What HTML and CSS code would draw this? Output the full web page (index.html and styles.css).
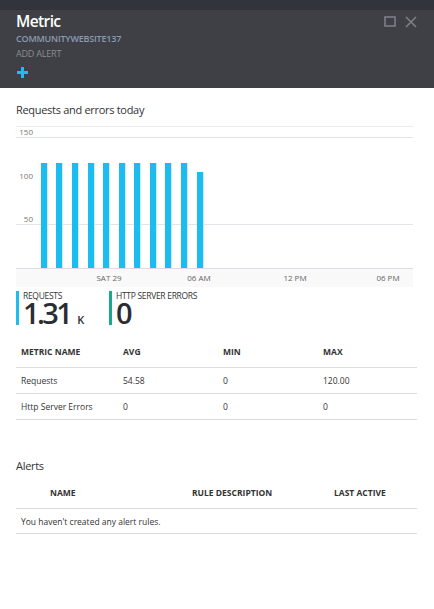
FILE: index.html
```html
<!DOCTYPE html>
<html>
<head>
<meta charset="utf-8">
<link rel="stylesheet" href="styles.css">
</head>
<body>
<div class="topstrip"></div>
<header class="blade-header">
  <div class="header-text">
    <div class="title">Metric</div>
    <div class="subtitle">COMMUNITYWEBSITE137</div>
    <div class="action-label">ADD ALERT</div>
    <svg class="plus" width="11" height="11" viewBox="0 0 11 11"><rect x="4" y="0" width="3" height="11" fill="#1ebcef"/><rect x="0" y="4" width="11" height="3" fill="#1ebcef"/></svg>
  </div>
  <div class="window-icons">
    <svg width="12" height="11" viewBox="0 0 12 11"><rect x="1" y="1" width="10" height="9" fill="none" stroke="#7c7f86" stroke-width="1.6"/></svg>
    <svg width="12" height="12" viewBox="0 0 12 12"><path d="M1 1 L11 11 M11 1 L1 11" stroke="#7c7f86" stroke-width="1.6"/></svg>
  </div>
</header>

<section class="chart-section">
  <div class="section-title">Requests and errors today</div>
  <svg class="chart" width="402" height="166" viewBox="0 0 402 166">
    <rect x="0" y="146" width="397" height="19" fill="#f9f9f9"/>
    <line x1="0" y1="4.5" x2="397" y2="4.5" stroke="#ececf0"/>
    <line x1="0" y1="15.5" x2="397" y2="15.5" stroke="#e3e3ea"/>
    <line x1="0" y1="102.5" x2="397" y2="102.5" stroke="#e3e3ea"/>
    <line x1="0" y1="146.5" x2="397" y2="146.5" stroke="#dcdce2"/>
    <g class="ylab">
      <text x="17" y="13" text-anchor="end">150</text>
      <text x="17" y="57" text-anchor="end">100</text>
      <text x="17" y="100" text-anchor="end">50</text>
    </g>
    <g fill="#1bbcef">
      <rect x="25" y="41" width="6" height="105"/>
      <rect x="40" y="41" width="6" height="105"/>
      <rect x="56" y="41" width="6" height="105"/>
      <rect x="72" y="41" width="6" height="105"/>
      <rect x="87" y="41" width="6" height="105"/>
      <rect x="103" y="41" width="6" height="105"/>
      <rect x="118" y="41" width="6" height="105"/>
      <rect x="134" y="41" width="6" height="105"/>
      <rect x="149" y="41" width="6" height="105"/>
      <rect x="165" y="41" width="6" height="105"/>
      <rect x="181" y="50" width="6" height="96"/>
    </g>
    <g fill="#c9eefb">
      <rect x="31" y="41" width="1" height="105"/>
      <rect x="46" y="41" width="1" height="105"/>
      <rect x="62" y="41" width="1" height="105"/>
      <rect x="78" y="41" width="1" height="105"/>
      <rect x="93" y="41" width="1" height="105"/>
      <rect x="109" y="41" width="1" height="105"/>
      <rect x="124" y="41" width="1" height="105"/>
      <rect x="140" y="41" width="1" height="105"/>
      <rect x="155" y="41" width="1" height="105"/>
      <rect x="171" y="41" width="1" height="105"/>
      <rect x="187" y="50" width="1" height="96"/>
    </g>
    <g class="xlab" text-anchor="middle">
      <text x="93" y="159">SAT 29</text>
      <text x="183" y="159">06 AM</text>
      <text x="279" y="159">12 PM</text>
      <text x="372" y="159">06 PM</text>
    </g>
  </svg>
</section>

<section class="stats">
  <div class="stat stat-blue">
    <div class="stat-label">REQUESTS</div>
    <div class="stat-value">1.31<span class="unit">K</span></div>
  </div>
  <div class="stat stat-green">
    <div class="stat-label">HTTP SERVER ERRORS</div>
    <div class="stat-value">0</div>
  </div>
</section>

<table class="metrics">
  <thead>
    <tr><th class="c1">METRIC NAME</th><th class="c2">AVG</th><th class="c3">MIN</th><th class="c4">MAX</th></tr>
  </thead>
  <tbody>
    <tr><td>Requests</td><td>54.58</td><td>0</td><td>120.00</td></tr>
    <tr><td>Http Server Errors</td><td>0</td><td>0</td><td>0</td></tr>
  </tbody>
</table>

<section class="alerts">
  <div class="section-title alerts-title">Alerts</div>
  <table class="alert-table">
    <thead>
      <tr><th class="a1">NAME</th><th class="a2">RULE DESCRIPTION</th><th class="a3">LAST ACTIVE</th></tr>
    </thead>
    <tbody>
      <tr><td colspan="3">You haven't created any alert rules.</td></tr>
    </tbody>
  </table>
</section>
</body>
</html>
```
FILE: styles.css
```css
* { box-sizing: border-box; }
body {
  margin: 0;
  background: #ffffff;
  font-family: "Open Sans", "Noto Sans", sans-serif;
  color: #333;
}
.topstrip { height: 10px; background: #31343a; }
.blade-header {
  height: 78px;
  background: #3e4046;
  display: flex;
  justify-content: space-between;
  padding: 0 17px 0 16px;
}
.header-text { display: flex; flex-direction: column; }
.title {
  color: #fff;
  font-size: 15.5px;
  font-weight: 600;
  line-height: 20px;
  margin-top: 1px;
  letter-spacing: -0.6px;
}
.subtitle {
  color: #8c9bb2;
  font-size: 9px;
  font-weight: 600;
  line-height: 15px;
  letter-spacing: -0.2px;
}
.action-label {
  color: #8b8d92;
  font-size: 9px;
  line-height: 15px;
  letter-spacing: -0.2px;
}
.plus { margin-top: 6px; margin-left: 1px; }
.window-icons {
  display: flex;
  gap: 9px;
  padding-top: 6px;
  align-items: flex-start;
}
.chart-section { padding: 0 16px; }
.section-title {
  font-size: 11px;
  color: #333;
  line-height: 14px;
  margin-top: 15px;
  letter-spacing: -0.3px;
}
.chart { display: block; margin-top: 5px; }
.ylab text { font-size: 8px; fill: #777; font-family: "Open Sans", sans-serif; }
.xlab text { font-size: 8px; fill: #666; font-family: "Open Sans", sans-serif; }
.stats {
  display: flex;
  padding-left: 16px;
  margin-top: 3px;
}
.stat {
  height: 34px;
  padding-left: 4px;
  display: flex;
  flex-direction: column;
}
.stat-blue { border-left: 3px solid #1ebcef; width: 93px; }
.stat-green { border-left: 3px solid #1aa98b; }
.stat-label {
  font-size: 8.5px;
  line-height: 10px;
  color: #333;
  letter-spacing: -0.3px;
}
.stat-value {
  font-size: 29px;
  line-height: 24px;
  color: #2a2d33;
  font-weight: 600;
  letter-spacing: -2.6px;
}
.unit { font-size: 11px; letter-spacing: 0; margin-left: 7px; font-weight: 600; }
table { border-collapse: collapse; }
.metrics {
  margin: 12px 17px 0 16px;
  width: 401px;
  font-size: 8.5px;
}
.metrics th {
  text-align: left;
  font-weight: 700;
  color: #333;
  height: 30px;
  padding: 0 0 0 5px;
  border-bottom: 1px solid #dcdcdc;
}
.metrics td {
  height: 26px;
  padding: 0 0 0 5px;
  border-bottom: 1px solid #dcdcdc;
  color: #333;
}
.c1 { width: 102px; }
.c2 { width: 100px; }
.c3 { width: 100px; }
.alerts { padding: 0 16px; }
.alerts-title { margin-top: 39px; }
.alert-table {
  width: 401px;
  margin-top: 5px;
  font-size: 8.5px;
}
.alert-table th {
  font-weight: 700;
  color: #333;
  height: 31px;
  text-align: left;
  border-bottom: 1px solid #dcdcdc;
  padding: 0;
}
.a1 { width: 176px; padding-left: 34px !important; }
.a2 { width: 142px; }
.alert-table td {
  height: 25px;
  padding-left: 5px;
  border-bottom: 1px solid #dcdcdc;
  color: #333;
}
```
